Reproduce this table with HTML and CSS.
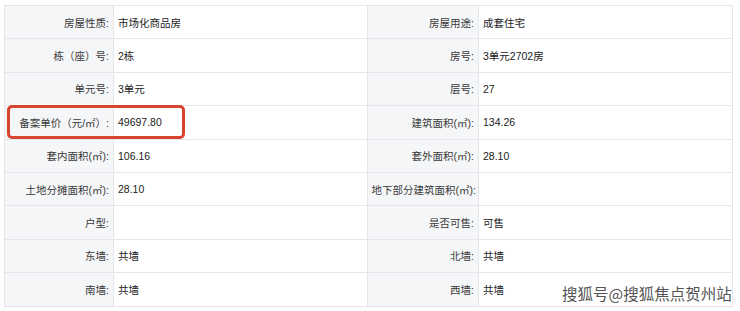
FILE: index.html
```html
<!DOCTYPE html>
<html lang="zh">
<head>
<meta charset="utf-8">
<link rel="stylesheet" href="styles.css">
</head>
<body>
<div class="page">
  <div class="table">
    <div class="lbl">房屋性质:</div><div class="val">市场化商品房</div>
    <div class="lbl">房屋用途:</div><div class="val">成套住宅</div>

    <div class="lbl">栋（座）号:</div><div class="val">2栋</div>
    <div class="lbl">房号:</div><div class="val">3单元2702房</div>

    <div class="lbl">单元号:</div><div class="val">3单元</div>
    <div class="lbl">层号:</div><div class="val">27</div>

    <div class="lbl">备案单价（元/㎡）:</div><div class="val">49697.80</div>
    <div class="lbl">建筑面积(㎡):</div><div class="val">134.26</div>

    <div class="lbl">套内面积(㎡):</div><div class="val">106.16</div>
    <div class="lbl">套外面积(㎡):</div><div class="val">28.10</div>

    <div class="lbl">土地分摊面积(㎡):</div><div class="val">28.10</div>
    <div class="lbl wide">地下部分建筑面积(㎡):</div><div class="val"></div>

    <div class="lbl">户型:</div><div class="val"></div>
    <div class="lbl">是否可售:</div><div class="val">可售</div>

    <div class="lbl">东墙:</div><div class="val">共墙</div>
    <div class="lbl">北墙:</div><div class="val">共墙</div>

    <div class="lbl">南墙:</div><div class="val">共墙</div>
    <div class="lbl">西墙:</div><div class="val">共墙</div>
  </div>
  <div class="highlight"></div>
  <div class="watermark">搜狐号@搜狐焦点贺州站</div>
</div>
</body>
</html>
```
FILE: styles.css
```css
html, body {
  margin: 0;
  padding: 0;
  background: #ffffff;
}
.page {
  position: relative;
  width: 740px;
  height: 311px;
  padding: 5px 0 0 4px;
  box-sizing: border-box;
  font-family: "Liberation Sans", "Noto Sans CJK SC", sans-serif;
  font-size: 10.5px;
  color: #333333;
}
.table {
  display: grid;
  grid-template-columns: 109px 254px 111px 254px;
  grid-auto-rows: 33.4px;
  width: 729px;
  border-top: 1px solid #e4e6ea;
  border-left: 1px solid #e4e6ea;
  box-sizing: border-box;
}
.lbl, .val {
  display: flex;
  align-items: center;
  border-right: 1px solid #e4e6ea;
  border-bottom: 1px solid #e4e6ea;
  box-sizing: border-box;
  white-space: nowrap;
}
.lbl {
  justify-content: flex-end;
  background: #f5f6f8;
  padding-right: 4px;
  color: #3a3a3a;
}
.lbl.wide {
  padding-right: 2px;
}
.val {
  background: #ffffff;
  padding-left: 4px;
  color: #222222;
}
.highlight {
  position: absolute;
  left: 7px;
  top: 105px;
  width: 178px;
  height: 34px;
  border: 3px solid #d8452f;
  border-radius: 5px;
  box-sizing: border-box;
}
.watermark {
  position: absolute;
  left: 562px;
  top: 282px;
  font-family: "Noto Sans CJK SC", sans-serif;
  font-size: 15.5px;
  color: #555555;
  text-shadow: 0 0 2px #ffffff, 0 0 2px #ffffff;
}
```
